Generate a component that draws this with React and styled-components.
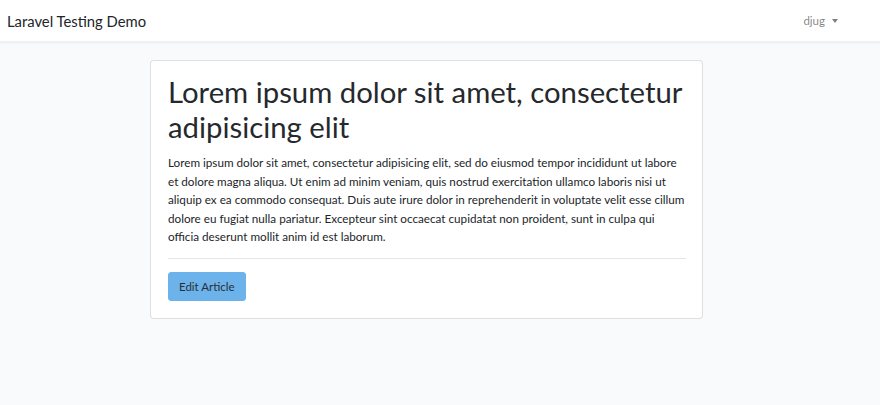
import React from 'react';
import styled, { createGlobalStyle } from 'styled-components';

const GlobalStyle = createGlobalStyle`
  * { box-sizing: border-box; }
  body {
    margin: 0;
    background: #f8fafc;
    font-family: Lato, "Noto Sans", sans-serif;
    color: #212529;
  }
`;

const Navbar = styled.nav`
  height: 42px;
  background: #fff;
  box-shadow: 0 1px 2px rgba(0, 0, 0, 0.06);
  border-bottom: 1px solid #eef0f2;
  display: flex;
  align-items: center;
  justify-content: space-between;
  padding: 0 42px 0 7px;
`;

const Brand = styled.a`
  font-size: 14.8px;
  color: #212529;
  text-decoration: none;
  cursor: pointer;
`;

const UserMenu = styled.div`
  display: flex;
  align-items: center;
  gap: 7px;
  font-size: 11.5px;
  color: rgba(0, 0, 0, 0.5);
  cursor: pointer;
`;

const Caret = styled.span`
  width: 0;
  height: 0;
  border-left: 3.5px solid transparent;
  border-right: 3.5px solid transparent;
  border-top: 4px solid rgba(0, 0, 0, 0.5);
`;

const Main = styled.main`
  display: flex;
  justify-content: center;
  padding: 18px 27px 0 0;
`;

const Card = styled.div`
  width: 553px;
  background: #fff;
  border: 1px solid rgba(0, 0, 0, 0.125);
  border-radius: 4px;
  padding: 13px 16px 17px 17px;
`;

const Title = styled.h1`
  margin: 0 0 9px;
  font-weight: 400;
  font-size: 29.3px;
  line-height: 35px;
  color: #25292d;
`;

const Text = styled.p`
  margin: 0;
  font-size: 11.7px;
  line-height: 18.6px;
`;

const Divider = styled.hr`
  border: 0;
  border-top: 1px solid rgba(0, 0, 0, 0.1);
  margin: 12px 0 13px;
`;

const Button = styled.button`
  background: #6cb2eb;
  border: 1px solid #6cb2eb;
  border-radius: 3px;
  color: #2a2f33;
  font-family: inherit;
  font-size: 11.5px;
  height: 29px;
  padding: 0 10px;
  cursor: pointer;
`;

export default function App() {
  return (
    <>
      <GlobalStyle />
      <Navbar>
        <Brand>Laravel Testing Demo</Brand>
        <UserMenu>
          djug
          <Caret />
        </UserMenu>
      </Navbar>
      <Main>
        <Card>
          <Title>Lorem ipsum dolor sit amet, consectetur adipisicing elit</Title>
          <Text>
            Lorem ipsum dolor sit amet, consectetur adipisicing elit, sed do eiusmod tempor incididunt ut labore
            et dolore magna aliqua. Ut enim ad minim veniam, quis nostrud exercitation ullamco laboris nisi ut
            aliquip ex ea commodo consequat. Duis aute irure dolor in reprehenderit in voluptate velit esse cillum
            dolore eu fugiat nulla pariatur. Excepteur sint occaecat cupidatat non proident, sunt in culpa qui
            officia deserunt mollit anim id est laborum.
          </Text>
          <Divider />
          <Button>Edit Article</Button>
        </Card>
      </Main>
    </>
  );
}
